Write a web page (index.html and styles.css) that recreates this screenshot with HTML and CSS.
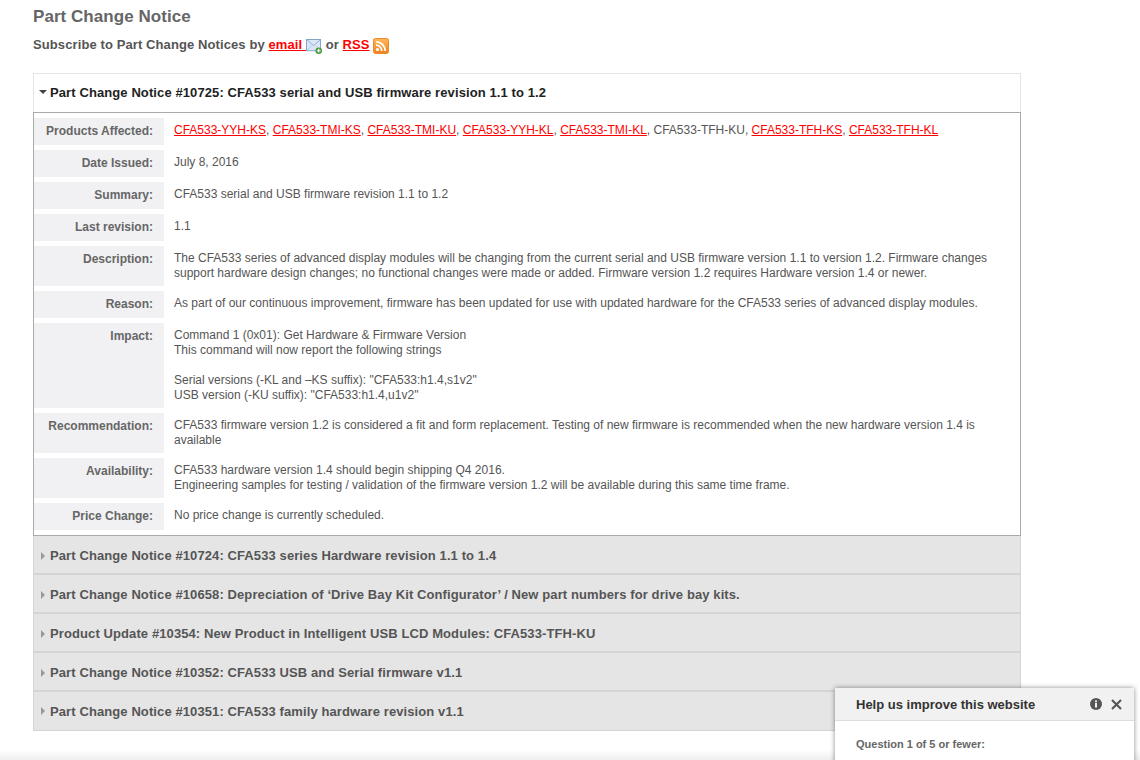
FILE: index.html
```html
<!DOCTYPE html>
<html lang="en">
<head>
<meta charset="utf-8">
<title>Part Change Notice</title>
<link rel="stylesheet" href="styles.css">
</head>
<body>
<main class="page">
  <h1 class="title">Part Change Notice</h1>
  <p class="subscribe">Subscribe to Part Change Notices by <a href="#">email <svg class="icon-mail" width="16" height="15" viewBox="0 0 17 16"><rect x="0.5" y="0.5" width="15" height="12" fill="#dbe7f6" stroke="#7f9fc8"/><path d="M1 1l7 6 7-6" fill="none" stroke="#8fabd0"/><path d="M1 12l5-5M15 12l-5-5" fill="none" stroke="#b4c8e2"/><circle cx="13.5" cy="12.5" r="3.5" fill="#4c9a3f"/><path d="M11.5 12.5h4M13.5 10.5v4" stroke="#fff" stroke-width="1.2"/></svg></a> or <a href="#">RSS</a> <svg class="icon-rss" width="16" height="16" viewBox="0 0 16 16"><defs><linearGradient id="rssbg" x1="0" y1="0" x2="0" y2="1"><stop offset="0" stop-color="#ffb85c"/><stop offset="1" stop-color="#f0801c"/></linearGradient></defs><rect x="0.5" y="0.5" width="15" height="15" rx="2" fill="url(#rssbg)" stroke="#e88a2a"/><circle cx="4.5" cy="11.5" r="1.6" fill="#fff"/><path d="M3 7.2a5.8 5.8 0 0 1 5.8 5.8M3 3.8a9.2 9.2 0 0 1 9.2 9.2" fill="none" stroke="#fff" stroke-width="1.8"/></svg></p>

  <section class="accordion">
    <h2 class="head head-open"><span class="caret-down"></span>Part Change Notice #10725: CFA533 serial and USB firmware revision 1.1 to 1.2</h2>
    <div class="panel">
      <div class="row"><div class="label">Products Affected:</div><div class="value"><a href="#">CFA533-YYH-KS</a>, <a href="#">CFA533-TMI-KS</a>, <a href="#">CFA533-TMI-KU</a>, <a href="#">CFA533-YYH-KL</a>, <a href="#">CFA533-TMI-KL</a>, CFA533-TFH-KU, <a href="#">CFA533-TFH-KS</a>, <a href="#">CFA533-TFH-KL</a></div></div>
      <div class="row"><div class="label">Date Issued:</div><div class="value">July 8, 2016</div></div>
      <div class="row"><div class="label">Summary:</div><div class="value">CFA533 serial and USB firmware revision 1.1 to 1.2</div></div>
      <div class="row"><div class="label">Last revision:</div><div class="value">1.1</div></div>
      <div class="row"><div class="label">Description:</div><div class="value">The CFA533 series of advanced display modules will be changing from the current serial and USB firmware version 1.1 to version 1.2. Firmware changes support hardware design changes; no functional changes were made or added. Firmware version 1.2 requires Hardware version 1.4 or newer.</div></div>
      <div class="row"><div class="label">Reason:</div><div class="value">As part of our continuous improvement, firmware has been updated for use with updated hardware for the CFA533 series of advanced display modules.</div></div>
      <div class="row"><div class="label">Impact:</div><div class="value">Command 1 (0x01): Get Hardware &amp; Firmware Version<br>This command will now report the following strings<br><br>Serial versions (-KL and –KS suffix): "CFA533:h1.4,s1v2"<br>USB version (-KU suffix): "CFA533:h1.4,u1v2"</div></div>
      <div class="row"><div class="label">Recommendation:</div><div class="value">CFA533 firmware version 1.2 is considered a fit and form replacement. Testing of new firmware is recommended when the new hardware version 1.4 is available</div></div>
      <div class="row"><div class="label">Availability:</div><div class="value">CFA533 hardware version 1.4 should begin shipping Q4 2016.<br>Engineering samples for testing / validation of the firmware version 1.2 will be available during this same time frame.</div></div>
      <div class="row"><div class="label">Price Change:</div><div class="value">No price change is currently scheduled.</div></div>
    </div>
    <h2 class="head head-closed"><span class="caret-right"></span>Part Change Notice #10724: CFA533 series Hardware revision 1.1 to 1.4</h2>
    <h2 class="head head-closed"><span class="caret-right"></span>Part Change Notice #10658: Depreciation of ‘Drive Bay Kit Configurator’ / New part numbers for drive bay kits.</h2>
    <h2 class="head head-closed"><span class="caret-right"></span>Product Update #10354: New Product in Intelligent USB LCD Modules: CFA533-TFH-KU</h2>
    <h2 class="head head-closed"><span class="caret-right"></span>Part Change Notice #10352: CFA533 USB and Serial firmware v1.1</h2>
    <h2 class="head head-closed"><span class="caret-right"></span>Part Change Notice #10351: CFA533 family hardware revision v1.1</h2>
  </section>
</main>
<div class="footer-fade"></div>
<aside class="survey">
  <div class="survey-head">
    <span class="survey-title">Help us improve this website</span>
    <svg class="survey-info" width="12" height="12" viewBox="0 0 12 12"><circle cx="6" cy="6" r="6" fill="#555"/><rect x="5" y="5" width="2" height="4.5" fill="#f1f1f1"/><rect x="5" y="2.4" width="2" height="1.8" fill="#f1f1f1"/></svg>
    <svg class="survey-close" width="11" height="11" viewBox="0 0 11 11"><path d="M1 1l9 9M10 1l-9 9" stroke="#555" stroke-width="2.2"/></svg>
  </div>
  <div class="survey-body">Question 1 of 5 or fewer:</div>
</aside>
</body>
</html>
```
FILE: styles.css
```css
html, body {
  margin: 0;
  height: 760px;
  overflow: hidden;
  background: #fff;
}
body {
  font-family: "Liberation Sans", Arial, sans-serif;
  font-size: 12px;
  line-height: 15px;
  color: #555;
}
.page {
  width: 988px;
  padding-left: 33px;
}
.title {
  margin: 0;
  padding-top: 6px;
  font-size: 17px;
  line-height: 21px;
  font-weight: bold;
  letter-spacing: 0.05px;
  color: #666;
}
.subscribe {
  margin: 0;
  padding-top: 9px;
  height: 37px;
  font-size: 13px;
  line-height: 17px;
  font-weight: bold;
  letter-spacing: 0.1px;
  color: #555;
}
.subscribe a {
  color: #f00;
}
.icon-mail {
  vertical-align: -5px;
}
.icon-rss {
  vertical-align: -5px;
}
.accordion {
  display: flex;
  flex-direction: column;
}
.head {
  margin: 0;
  display: flex;
  align-items: center;
  font-size: 13px;
  font-weight: bold;
  line-height: 15px;
  letter-spacing: 0.1px;
  box-sizing: border-box;
}
.head-open {
  height: 39px;
  color: #222;
  border: 1px solid #e4e4e4;
  border-bottom: 0;
  padding-left: 5px;
  padding-bottom: 2px;
}
.head-closed {
  height: 39px;
  color: #555;
  background: #e5e5e5;
  border: 1px solid #d4d4d4;
  border-top: 0;
  border-bottom-width: 2px;
  padding-left: 7px;
  padding-top: 2px;
}
.head-closed:last-child {
  border-bottom-width: 1px;
  padding-top: 0;
}
.caret-down {
  width: 0;
  height: 0;
  border-left: 4px solid transparent;
  border-right: 4px solid transparent;
  border-top: 4px solid #444;
  margin-right: 3px;
}
.caret-right {
  width: 0;
  height: 0;
  border-top: 4px solid transparent;
  border-bottom: 4px solid transparent;
  border-left: 4px solid #999;
  margin-right: 5px;
}
.panel {
  border: 1px solid #aaa;
  padding-top: 5px;
}
.row {
  display: grid;
  grid-template-columns: 130px 1fr;
  column-gap: 10px;
  min-height: 27px;
  margin-bottom: 5px;
}
.label {
  background: #f1f1f3;
  padding: 6px 11px 4px 0;
  text-align: right;
  font-weight: bold;
  color: #666;
}
.value {
  padding: 5px 30px 5px 0;
}
.value a {
  color: #f00;
}
.footer-fade {
  position: absolute;
  left: 0;
  right: 0;
  top: 750px;
  height: 10px;
  background: linear-gradient(#fff, #eee);
}
.survey {
  position: absolute;
  left: 835px;
  top: 688px;
  width: 299px;
  height: 90px;
  background: #fff;
  box-shadow: 0 0 5px rgba(0, 0, 0, 0.45);
}
.survey-head {
  height: 33px;
  box-sizing: border-box;
  display: flex;
  align-items: center;
  padding: 0 12px 0 21px;
  background: #f1f1f1;
  border-bottom: 1px solid #ddd;
}
.survey-title {
  flex: 1;
  font-size: 13px;
  font-weight: bold;
  color: #333;
}
.survey-info {
  margin-right: 9px;
}
.survey-body {
  padding: 16px 21px;
  font-size: 11px;
  font-weight: bold;
  color: #666;
}
```
